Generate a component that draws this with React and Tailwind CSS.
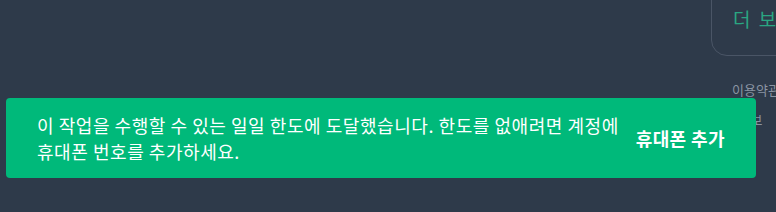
export default function App() {
  const font = { fontFamily: '"Noto Sans CJK KR", "Noto Sans", sans-serif' };
  return (
    <div className="relative w-[776px] h-[212px] overflow-hidden bg-[#2e3a4a]" style={font}>
      <div className="flex h-full">
        <div className="w-[674px] shrink-0" />
        <div className="w-px h-full bg-[#3b4757]" />
        <div className="flex flex-col pl-[37px]">
          <div className="mt-[-30px] w-[200px] h-[86px] rounded-2xl border border-[#4a5566] pl-[21px] pt-[37px]">
            <span className="text-[19px] leading-none text-[#2aa682] tracking-[2px] whitespace-nowrap">더 보기</span>
          </div>
          <div className="pl-[21px] mt-[19px] text-[13px] leading-[30px] text-[#8a94a3] whitespace-nowrap">
            <div>이용약관</div>
            <div>, 정보</div>
          </div>
        </div>
      </div>
      <div className="absolute left-[6px] top-[98px] w-[750px] h-[80px] rounded-[4px] bg-[#00b97a] flex items-center justify-between pl-[31px] pr-[31px]">
        <p className="w-[595px] text-[18px] leading-[26px] tracking-[0.55px] break-keep text-white">
          이 작업을 수행할 수 있는 일일 한도에 도달했습니다. 한도를 없애려면 계정에 휴대폰 번호를 추가하세요.
        </p>
        <button className="text-[18px] font-bold tracking-[0.4px] text-white whitespace-nowrap">휴대폰 추가</button>
      </div>
    </div>
  );
}
